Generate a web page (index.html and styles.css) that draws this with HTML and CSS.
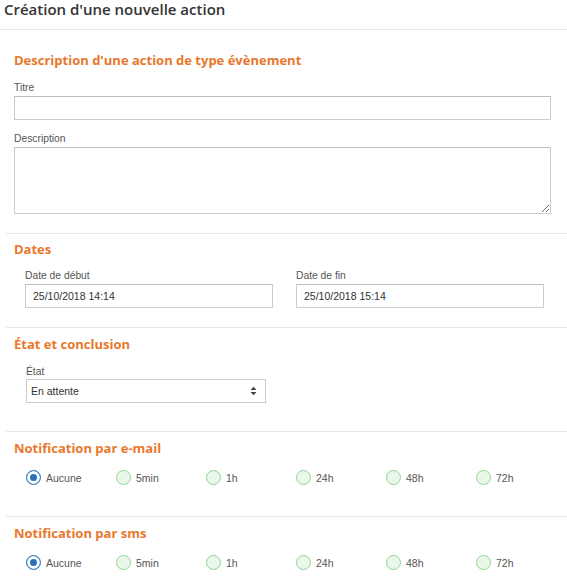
FILE: index.html
```html
<!DOCTYPE html>
<html lang="fr">
<head>
<meta charset="utf-8">
<title>Création d'une nouvelle action</title>
<link rel="stylesheet" href="styles.css">
</head>
<body>
<header class="page-header">
  <h1 class="page-title">Création d'une nouvelle action</h1>
</header>

<section class="section section-first">
  <h2 class="section-title">Description d'une action de type évènement</h2>
  <div class="field">
    <label class="field-label">Titre</label>
    <input class="text-input" type="text">
  </div>
  <div class="field">
    <label class="field-label">Description</label>
    <textarea class="text-area"></textarea>
  </div>
</section>

<section class="section section-dates">
  <h2 class="section-title">Dates</h2>
  <div class="date-row">
    <div class="field date-field">
      <label class="field-label">Date de début</label>
      <input class="text-input" type="text" value="25/10/2018 14:14">
    </div>
    <div class="field date-field">
      <label class="field-label">Date de fin</label>
      <input class="text-input" type="text" value="25/10/2018 15:14">
    </div>
  </div>
</section>

<section class="section section-state">
  <h2 class="section-title">État et conclusion</h2>
  <div class="field state-field">
    <label class="field-label">État</label>
    <div class="select-wrap">
      <select class="select-input">
        <option>En attente</option>
      </select>
      <svg class="select-arrow" width="7" height="10" viewBox="0 0 7 10"><path d="M0.5 4 L3.5 0.8 L6.5 4 Z M0.5 6 L3.5 9.2 L6.5 6 Z" fill="#444"/></svg>
    </div>
  </div>
</section>

<section class="section section-notif">
  <h2 class="section-title">Notification par e-mail</h2>
  <div class="radio-row">
    <label class="radio-opt"><input type="radio" name="mail" class="radio" checked><span>Aucune</span></label>
    <label class="radio-opt"><input type="radio" name="mail" class="radio"><span>5min</span></label>
    <label class="radio-opt"><input type="radio" name="mail" class="radio"><span>1h</span></label>
    <label class="radio-opt"><input type="radio" name="mail" class="radio"><span>24h</span></label>
    <label class="radio-opt"><input type="radio" name="mail" class="radio"><span>48h</span></label>
    <label class="radio-opt"><input type="radio" name="mail" class="radio"><span>72h</span></label>
  </div>
</section>

<section class="section section-notif">
  <h2 class="section-title">Notification par sms</h2>
  <div class="radio-row">
    <label class="radio-opt"><input type="radio" name="sms" class="radio" checked><span>Aucune</span></label>
    <label class="radio-opt"><input type="radio" name="sms" class="radio"><span>5min</span></label>
    <label class="radio-opt"><input type="radio" name="sms" class="radio"><span>1h</span></label>
    <label class="radio-opt"><input type="radio" name="sms" class="radio"><span>24h</span></label>
    <label class="radio-opt"><input type="radio" name="sms" class="radio"><span>48h</span></label>
    <label class="radio-opt"><input type="radio" name="sms" class="radio"><span>72h</span></label>
  </div>
</section>
</body>
</html>
```

FILE: styles.css
```css
* { box-sizing: border-box; }

body {
  margin: 0;
  width: 567px;
  background: #ffffff;
  font-family: "Liberation Sans", Arial, sans-serif;
  color: #444;
  overflow: hidden;
}

.page-header {
  padding: 0 4px 11px 4px;
  border-bottom: 1px solid #e8e8e8;
}

.page-title {
  margin: 0;
  font-family: "Open Sans", sans-serif;
  font-size: 15px;
  font-weight: 600;
  line-height: 18px;
  color: #333;
}

.section {
  margin-left: 6px;
  padding: 6px 16px 19px 8px;
  border-top: 1px solid #e8e8e8;
}

.section-first {
  border-top: none;
  padding-top: 21px;
}

.section-title {
  margin: 0;
  font-family: "Open Sans", sans-serif;
  font-size: 13px;
  font-weight: 700;
  line-height: 18px;
  color: #e8782c;
}

.section-notif,
.section-state { padding-top: 7px; }

.field {
  display: flex;
  flex-direction: column;
  margin-top: 13px;
}

.field-label {
  font-size: 10.3px;
  line-height: 12px;
  color: #555;
  margin-bottom: 2px;
}

.text-input {
  height: 24px;
  width: 100%;
  border: 1px solid #cccccc;
  border-top-color: #bdbdbd;
  padding: 0 7px;
  font-family: "Liberation Sans", Arial, sans-serif;
  font-size: 10.5px;
  color: #333;
  background: #fff;
  outline: none;
}

.text-area {
  height: 67px;
  width: 100%;
  border: 1px solid #cccccc;
  border-top-color: #bdbdbd;
  font-family: "Liberation Sans", Arial, sans-serif;
  font-size: 11px;
  background: #fff;
  outline: none;
}

.date-row {
  display: grid;
  grid-template-columns: 248px 248px;
  column-gap: 23px;
  margin-left: 11px;
  margin-top: 12px;
}

.date-row .field { margin-top: 0; }

.section-state { padding-bottom: 28px; }

.state-field {
  margin-left: 12px;
  width: 240px;
  margin-top: 13px;
}

.state-field .field-label { margin-bottom: 1px; }

.select-wrap {
  position: relative;
  width: 240px;
  height: 24px;
}

.select-input {
  appearance: none;
  -webkit-appearance: none;
  display: block;
  width: 100%;
  height: 24px;
  border: 1px solid #cccccc;
  border-radius: 0;
  padding: 0 4px;
  background: #fff;
  font-family: "Liberation Sans", Arial, sans-serif;
  font-size: 10.5px;
  color: #333;
  outline: none;
}

.select-arrow {
  position: absolute;
  right: 9px;
  top: 7px;
}

.section-notif { padding-bottom: 31px; }

.radio-row {
  display: flex;
  margin-top: 13px;
  margin-left: 12px;
}

.radio-opt {
  display: flex;
  align-items: center;
  flex: none;
  width: 90px;
  height: 15px;
  font-size: 10.5px;
  color: #555;
}

.radio {
  appearance: none;
  -webkit-appearance: none;
  margin: 0 5px 0 0;
  width: 15px;
  height: 15px;
  border-radius: 50%;
  border: 1px solid #93d396;
  background: #e9f8e9;
  flex: none;
}

.radio:checked {
  border-color: #3d7fc6;
  background: #2f6fb7;
  box-shadow: inset 0 0 0 3px #ffffff;
}
```
